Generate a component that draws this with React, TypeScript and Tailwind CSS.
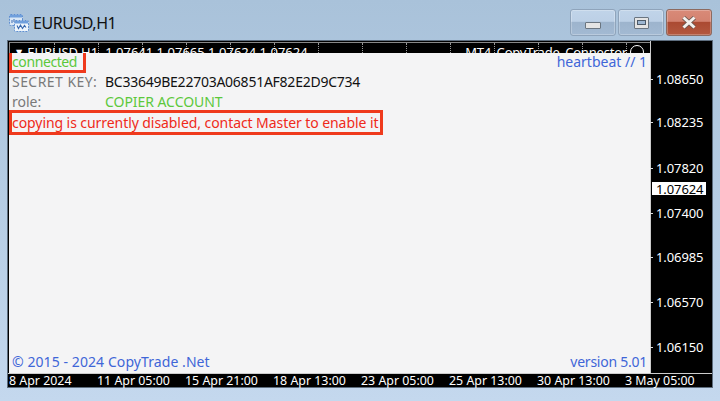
const prices = [
  { label: "1.08650", cls: "mt-[31px]" },
  { label: "1.08235", cls: "mt-[29px]" },
  { label: "1.07820", cls: "mt-[32px]" },
  { label: "1.07400", cls: "mt-[31px]" },
  { label: "1.06985", cls: "mt-[30px]" },
  { label: "1.06570", cls: "mt-[31px]" },
  { label: "1.06150", cls: "mt-[31px]" },
];

const times = [
  "8 Apr 2024",
  "11 Apr 05:00",
  "15 Apr 21:00",
  "18 Apr 13:00",
  "23 Apr 05:00",
  "25 Apr 13:00",
  "30 Apr 13:00",
  "3 May 05:00",
];

function ChartIcon() {
  return (
    <svg width="20" height="20" viewBox="0 0 20 20" className="shrink-0">
      <rect x="0.5" y="1.5" width="13" height="11" rx="1" fill="#d9e7f6" stroke="#5f8fd0" strokeDasharray="2 1" />
      <rect x="1" y="2" width="12" height="2.5" fill="#6f9fdc" />
      <path d="M3 7v3M5 6v3M7 7v2" stroke="#3f6fb5" />
      <rect x="5.5" y="7.5" width="14" height="11" rx="1" fill="#eef5fc" stroke="#5f8fd0" strokeDasharray="2 1" />
      <rect x="6" y="8" width="13" height="2.5" fill="#6f9fdc" />
      <path d="M8 12.5l1.5 3 2-3.5 2 3.5 2-3 1.5 2" fill="none" stroke="#3566ad" strokeWidth="1.1" />
    </svg>
  );
}

function WinButton({ kind }: { kind: "min" | "max" | "close" }) {
  const tone =
    kind === "close"
      ? "bg-[linear-gradient(#d98a78_0%,#d38270_45%,#ab4a32_50%,#b3583f_100%)] border-[#8c6a60]"
      : "bg-[linear-gradient(#c1d4e9_0%,#bcd0e6_45%,#9db4cd_50%,#a3bad3_100%)] border-[#8fa4bb]";
  return (
    <div className={`flex h-[27px] w-[46px] items-center justify-center rounded-[3px] border shadow-[inset_0_0_0_1px_rgba(255,255,255,0.25)] ${tone}`}>
      {kind === "min" && <div className="mt-[5px] h-[7px] w-[16px] rounded-[1px] border border-[#6a7580] bg-[#e4e4e4]" />}
      {kind === "max" && (
        <div className="flex h-[12px] w-[15px] items-center justify-center rounded-[1px] border border-[#6a7580] bg-[#e4e4e4]">
          <div className="h-[5px] w-[9px] border border-[#4d5a68] bg-[#9db6d1]" />
        </div>
      )}
      {kind === "close" && (
        <svg width="16" height="13" viewBox="0 0 16 13">
          <path d="M2.5 1.5L13.5 11.5M13.5 1.5L2.5 11.5" stroke="#6b564f" strokeWidth="4.4" />
          <path d="M2.5 1.5L13.5 11.5M13.5 1.5L2.5 11.5" stroke="#f4f1ee" strokeWidth="3" />
        </svg>
      )}
    </div>
  );
}

export default function App() {
  return (
    <div className="flex h-[401px] w-[720px] flex-col overflow-hidden bg-[linear-gradient(#a9c2da_0%,#b6cde4_50%,#c4d8ee_100%)] font-['Noto_Sans','DejaVu_Sans',sans-serif]">
      <div className="flex h-[40px] shrink-0 items-start pl-[9px] pr-[8px]">
        <div className="mt-[13px] flex items-center gap-[4px]">
          <ChartIcon />
          <span className="text-[16px] leading-[20px] tracking-[-0.45px] text-[#111]">EURUSD,H1</span>
        </div>
        <div className="ml-auto mt-[9px] flex gap-[2px]">
          <WinButton kind="min" />
          <WinButton kind="max" />
          <WinButton kind="close" />
        </div>
      </div>

      <div className="mx-[7px] flex h-[348px] w-[706px] flex-col border border-[#5d6d7e] bg-black">
        <div className="flex min-h-0 flex-1">
          <div className="flex w-[642px] flex-col border-l-[1px] border-t-[1px] border-l-black border-t-black">
            <div className="relative h-[11px] shrink-0 overflow-hidden border-l border-t border-[#888] text-[13px] leading-[16px] text-white">
              <div className="absolute left-[44px] top-0 flex h-full">
                {Array.from({ length: 14 }, (_, i) => (
                  <div key={i} className="h-full w-[44px] border-l border-dotted border-[#999]" />
                ))}
              </div>
              <div className="absolute left-[6px] top-[1px] flex w-[628px] items-center whitespace-nowrap">
                <span className="mr-[5px] text-[8px]">▼</span>
                <span>EURUSD,H1</span>
                <span className="ml-[7px]">1.07641 1.07665 1.07624 1.07624</span>
                <span className="ml-auto tracking-[-0.2px]">MT4_CopyTrade_Connector</span>
                <span className="ml-[3px] h-[14px] w-[14px] shrink-0 rounded-full border border-white" />
              </div>
            </div>

            <div className="flex min-h-0 flex-1 flex-col justify-between bg-[#f4f4f5] text-[14px] leading-[17px]">
              <div>
                <div className="flex items-start justify-between">
                  <span className="border-[3px] border-t-0 border-[#ef3a1d] pl-[0px] pr-[6px] tracking-[-0.4px] text-[#5cc83c]">connected</span>
                  <span className="mr-[3px] text-[#3f66d8]">heartbeat // 1</span>
                </div>
                <div className="flex pl-[3px]">
                  <span className="w-[93px] tracking-[0.45px] text-[#7a7a7a]">SECRET KEY:</span>
                  <span className="tracking-[-0.25px] text-[#111]">BC33649BE22703A06851AF82E2D9C734</span>
                </div>
                <div className="mt-[3px] flex pl-[3px]">
                  <span className="w-[93px] text-[#7a7a7a]">role:</span>
                  <span className="tracking-[-0.05px] text-[#5cc83c]">COPIER ACCOUNT</span>
                </div>
                <div className="w-fit border-[3px] border-[#ef3a1d] py-[1px] pr-[2px] tracking-[-0.07px] text-[#ef2a1a]">
                  copying is currently disabled, contact Master to enable it
                </div>
              </div>
              <div className="flex justify-between px-[3px] pb-[3px] text-[#3f66d8]">
                <span className="tracking-[0.08px]">© 2015 - 2024 CopyTrade .Net</span>
                <span className="tracking-[-0.25px]">version 5.01</span>
              </div>
            </div>
          </div>

          <div className="relative w-[62px] border-l border-[#ccc] pl-[5px] text-[13px] leading-[14px] tracking-[-0.1px] text-white">
            {prices.map((p) => (
              <div key={p.label} className={`${p.cls} relative flex h-[14px] items-center`}>
                <span className="absolute left-[-6px] top-[7px] h-[1px] w-[3px] bg-[#ddd]" />
                {p.label}
              </div>
            ))}
            <div className="absolute left-[0px] top-[140px] flex h-[15px] w-[56px] items-center border border-black bg-white pl-[4px] text-black">
              1.07624
            </div>
          </div>
        </div>

        <div className="flex h-[14px] shrink-0 whitespace-nowrap border-t border-[#ccc] pl-[1px] text-[12.4px] leading-[14px] text-white">
          {times.map((t) => (
            <div key={t} className="w-[88px] shrink-0">{t}</div>
          ))}
        </div>
      </div>
    </div>
  );
}
